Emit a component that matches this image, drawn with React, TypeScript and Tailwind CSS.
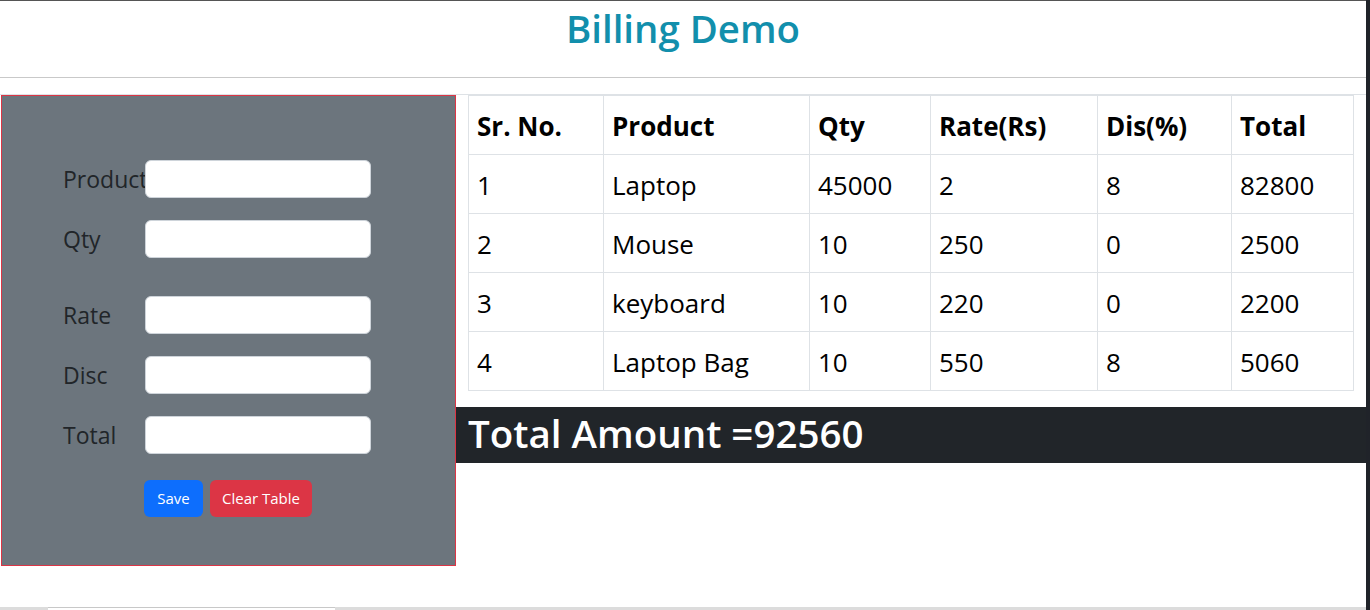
import React from "react";

const rows = [
  ["1", "Laptop", "45000", "2", "8", "82800"],
  ["2", "Mouse", "10", "250", "0", "2500"],
  ["3", "keyboard", "10", "220", "0", "2200"],
  ["4", "Laptop Bag", "10", "550", "8", "5060"],
];

const heads = ["Sr. No.", "Product", "Qty", "Rate(Rs)", "Dis(%)", "Total"];
const widths = ["w-[135px]", "w-[206px]", "w-[121px]", "w-[167px]", "w-[134px]", "w-[122px]"];

function Field({ label, className = "" }: { label: string; className?: string }) {
  return (
    <div className={"flex items-center h-[38px] " + className}>
      <span className="w-[82px] text-[23px] leading-none text-[#212529] whitespace-nowrap">{label}</span>
      <div className="w-[226px] h-[38px] bg-white border border-[#ced4da] rounded-[6px]" />
    </div>
  );
}

export default function App() {
  return (
    <div className="w-[1370px] h-[610px] overflow-hidden bg-white flex font-['Open_Sans',sans-serif]">
      <div className="w-[1366px] h-full flex flex-col border-t border-[#555555] relative">
        <div className="h-[76px] flex justify-center">
          <h1 className="mt-[4px] text-[38.4px] leading-[1.2] font-semibold text-[#128fac]">Billing Demo</h1>
        </div>
        <div className="h-px bg-[#c9c9c9]" />
        <div className="h-[16px]" />
        <div className="h-px bg-[#dee2e6]" />
        <div className="flex">
          <div className="w-[455px] ml-px h-[471px] bg-[#6c757d] border border-[#dc3545] flex flex-col pl-[61px] pt-[64px]">
            <Field label="Product" />
            <Field label="Qty" className="mt-[22px]" />
            <Field label="Rate" className="mt-[38px]" />
            <Field label="Disc" className="mt-[22px]" />
            <Field label="Total" className="mt-[22px]" />
            <div className="flex gap-[7px] mt-[26px] ml-[81px]">
              <button className="h-[37px] w-[59px] rounded-[6px] bg-[#0d6efd] text-white text-[15px] font-['Open_Sans',sans-serif]">Save</button>
              <button className="h-[37px] w-[102px] rounded-[6px] bg-[#dc3545] text-white text-[15px] font-['Open_Sans',sans-serif]">Clear Table</button>
            </div>
          </div>
          <div className="flex-1 flex flex-col">
            <div className="px-[12px]">
              <table className="table-fixed border-collapse w-[885px] text-black">
                <colgroup>
                  {widths.map((w, i) => (
                    <col key={i} className={w} />
                  ))}
                </colgroup>
                <thead>
                  <tr>
                    {heads.map((h) => (
                      <th key={h} className="border border-[#dee2e6] text-left font-bold text-[26px] leading-[42px] px-[8px] pt-[9px] pb-[7px] whitespace-nowrap">{h}</th>
                    ))}
                  </tr>
                </thead>
                <tbody>
                  {rows.map((r) => (
                    <tr key={r[0]}>
                      {r.map((c, i) => (
                        <td key={i} className="border border-[#dee2e6] text-left text-[26px] leading-[42px] px-[8px] pt-[9px] pb-[7px] whitespace-nowrap">{c}</td>
                      ))}
                    </tr>
                  ))}
                </tbody>
              </table>
            </div>
            <div className="mt-[16px] h-[56px] bg-[#212529] flex items-center pl-[12px]">
              <span className="text-white text-[38.5px] font-semibold leading-none -mt-[3px]">Total Amount =92560</span>
            </div>
          </div>
        </div>
        <div className="mt-auto h-[3px] bg-[#dcdcdc] flex">
          <div className="ml-[48px] w-[287px] h-full bg-white border-t border-[#c8c8c8]" />
        </div>
      </div>
      <div className="w-[4px] h-full bg-[#202329]" />
    </div>
  );
}
